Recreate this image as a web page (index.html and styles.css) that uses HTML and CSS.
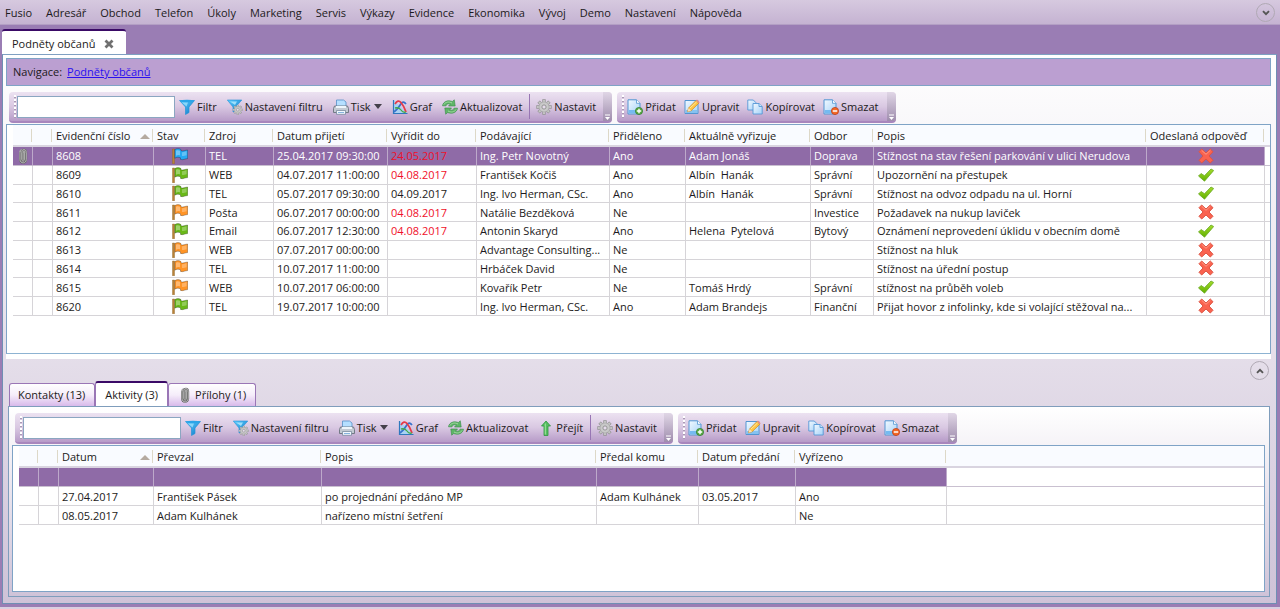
FILE: index.html
```html
<!DOCTYPE html>
<html lang="cs">
<head>
<meta charset="utf-8">
<title>Podněty občanů</title>
<link rel="stylesheet" href="styles.css">
</head>
<body>
<svg class="sprite" aria-hidden="true">
<defs>
<linearGradient id="gBlue" x1="0" y1="0" x2="1" y2="1"><stop offset="0" stop-color="#5fd0ff"/><stop offset="1" stop-color="#0b78c8"/></linearGradient>
<linearGradient id="gDoc" x1="0" y1="0" x2="1" y2="1"><stop offset="0" stop-color="#f2f9ff"/><stop offset="1" stop-color="#a5d2f8"/></linearGradient>
<linearGradient id="gCheck" x1="0" y1="0" x2="0" y2="1"><stop offset="0" stop-color="#a4dc2c"/><stop offset="1" stop-color="#62b000"/></linearGradient>
</defs>
<symbol id="funnel" viewBox="0 0 16 16"><path d="M.5 1.500h15L10 8v5.500L6.500 15.500V8z" fill="url(#gBlue)" stroke="#2592d8" stroke-width=".7"/><ellipse cx="8" cy="2" rx="7" ry="1.300" fill="#2ba5e8"/><path d="M3 3.600h6L7.500 7.500z" fill="#a9e7ff" opacity=".7"/></symbol>
<symbol id="cog" viewBox="0 0 16 16"><g stroke="#949494" stroke-width="3.400"><path d="M8 .3v15.400M.3 8h15.400M2.600 2.600l10.800 10.800M13.400 2.600L2.600 13.400"/></g><g stroke="#c4c4c4" stroke-width="2.100"><path d="M8 .9v14.200M.9 8h14.200M3 3l10 10M13 3L3 13"/></g><circle cx="8" cy="8" r="5" fill="#c9c9c9" stroke="#a5a5a5" stroke-width=".6"/><circle cx="8" cy="8" r="2.100" fill="#e6dcec" stroke="#8e8e8e" stroke-width=".9"/></symbol>
<symbol id="funnelset" viewBox="0 0 16 16"><path d="M.3 1h14.500L9.500 7v4L6 13V8z" fill="url(#gBlue)" stroke="#2592d8" stroke-width=".6"/><path d="M3 2.500h7L8 6z" fill="#b5ebff" opacity=".8"/><use href="#cog" x="5.500" y="5.500" width="10.500" height="10.500"/></symbol>
<symbol id="printer" viewBox="0 0 16 16"><path d="M3.500 8V1h7l2.500 2v5z" fill="#b5dfff" stroke="#5790c8" stroke-width=".8"/><path d="M1.500 7h13l1 2.500V13.500H.5V9.500z" fill="#c3cad3" stroke="#6a727d" stroke-width=".9"/><path d="M3 7h10v2H3z" fill="#eef5fb"/><path d="M3.500 11.500h9v3.800h-9z" fill="#f2f8ff" stroke="#6f8296" stroke-width=".7"/><path d="M5 13.500h6" stroke="#86b4de"/></symbol>
<symbol id="graph" viewBox="0 0 16 16"><path d="M1.500 1v13.500H15z" fill="#a9d2f3"/><path d="M1.500 1v13.500H15.500" fill="none" stroke="#2f78bd" stroke-width="1.200"/><path d="M2 13Q6 10 8.500 5.500T14 5" fill="none" stroke="#3872cc" stroke-width="1.700"/><path d="M3 5q3-5 6-1.500T14 13" fill="none" stroke="#e53b49" stroke-width="1.800"/><path d="M3 9q4-1 6 2t5 2" fill="none" stroke="#46a948" stroke-width="1.300"/></symbol>
<symbol id="refresh" viewBox="0 0 16 16"><g fill="#5eb567" stroke="#388c48" stroke-width=".6" stroke-linejoin="round"><path d="M.5 6.800C1.200 2.500 6 .7 10.300 2.500l2-1.700.9 6.200H6.500l1.900-2C6.300 4.300 4.500 5 4 6.800z"/><path d="M15.500 9.200c-.7 4.300-5.500 6.100-9.800 4.300l-2 1.700L2.800 9h6.700l-1.900 2c2.100.7 3.900 0 4.400-1.800z"/></g><path d="M1.800 5.600C3.500 2.800 7 2.300 10 4M14.200 10.400c-1.700 2.800-5.200 3.300-8.200 1.600" fill="none" stroke="#a8dda6" stroke-width=".9"/></symbol>
<symbol id="up" viewBox="0 0 16 16"><path d="M8 1l4.500 5H10v9.500H6V6H3.500z" fill="#57bd61" stroke="#2e9740" stroke-width=".8"/><path d="M7.300 3.500v11" stroke="#a1e79d"/></symbol>
<symbol id="doc" viewBox="0 0 16 16"><path d="M2 .8h8.500l3.500 3.500V15H2z" fill="url(#gDoc)" stroke="#5295d2" stroke-width="1"/><path d="M10.500.8v3.500H14" fill="#fff" stroke="#5295d2" stroke-width=".8"/><path d="M2.800 11h10.400v3.300H2.800z" fill="#75baf0"/></symbol>
<symbol id="add" viewBox="0 0 16 16"><use href="#doc" x="-1" width="16" height="16"/><circle cx="12" cy="12" r="3.600" fill="#5bab46" stroke="#2d7a2a" stroke-width=".7"/><path d="M9.800 12h4.400M12 9.800v4.400" stroke="#fff" stroke-width="1.400"/></symbol>
<symbol id="remove" viewBox="0 0 16 16"><use href="#doc" x="-1" width="16" height="16"/><circle cx="12" cy="12" r="3.600" fill="#f36a27" stroke="#bd3510" stroke-width=".7"/><path d="M9.800 12h4.400" stroke="#fff" stroke-width="1.500"/></symbol>
<symbol id="edit" viewBox="0 0 16 16"><path d="M1 1.500h13v13H1z" fill="url(#gDoc)" stroke="#5295d2"/><path d="M2 11h11v3H2z" fill="#85c2f0"/><path d="M4.500 9L12 1.500l2.800 2.700-7.600 7.500-3.700 1z" fill="#ffc544" stroke="#c98722" stroke-width=".7"/><path d="M12 1.500l1-1 2.700 2.700-.9 1z" fill="#ee8b82"/><path d="M3.500 12.700l1-3.700 2.700 2.700z" fill="#f7dfb5"/><path d="M6 9l6.500-6" stroke="#ffe898"/></symbol>
<symbol id="copy" viewBox="0 0 16 16"><g fill="url(#gDoc)" stroke="#5597d6" stroke-width=".9"><path d="M.8 1h5.500l2.500 2.500V11h-8z"/><path d="M6 4.500h6l3.200 3V15H6z"/><path d="M12 4.500v3h3.200"/></g></symbol>
<symbol id="clip" viewBox="0 0 16 16"><rect x="4" y="1" width="8" height="14" rx="4" fill="#a5a5a5"/><path d="M5 4.500v7c0 4.500 6.300 4.500 6.300 0V4.500c0-4-4.600-4-4.600 0v6.700c0 2.300 2.900 2.300 2.900 0V5" fill="none" stroke="#626262" stroke-width="1.700"/><path d="M5 4.500v7c0 4.500 6.300 4.500 6.300 0V4.500c0-4-4.600-4-4.600 0v6.700c0 2.300 2.900 2.300 2.900 0V5" fill="none" stroke="#c6c6c6" stroke-width=".8"/></symbol>
<symbol id="flag" viewBox="0 0 16 16"><path d="M.5 1h2v14.800h-2z" fill="#b88237" stroke="#8d6225" stroke-width=".4"/><path d="M2.800 1.600C5 .2 7.200.3 9 1.600v1.200c2.500.8 4.300-.8 6.700-.8v8.600c-2.500 0-4.500 1.700-7.200.8v-1.600c-2-.9-3.900-.7-5.700.4z" fill="currentColor" stroke="#00000055" stroke-width=".8"/><path d="M4 2.800c1.500-.8 2.700-.6 4 0v4.600c-1.500-.5-2.700-.3-4 .3z" fill="#fff" opacity=".35"/><path d="M10 4.200c2 .2 3-.5 4.600-.9v4c-1.600.2-2.800.9-4.600.7z" fill="#fff" opacity=".28"/></symbol>
<symbol id="cross" viewBox="0 0 16 16"><path d="M3.700 1L8 5l4.300-4L15 3.700 11 8l4 4.300-2.700 2.700L8 11l-4.300 4L1 12.300 5 8 1 3.700z" fill="#fa6350" stroke="#dd5544" stroke-width="1" stroke-linejoin="round"/><path d="M3.700 2.300L8 6.300l4.300-4" fill="none" stroke="#ff9f8c" stroke-width=".9"/></symbol>
<symbol id="check" viewBox="0 0 16 16"><path d="M.5 9L3 6.500l3.500 2.200L13 2l2.700 1.500-9.200 10.700z" fill="url(#gCheck)" stroke="#6aa824" stroke-width=".8" stroke-linejoin="round"/></symbol>
<symbol id="chevron" viewBox="0 0 8 6"><path d="M1 1.200l3 3 3-3" fill="none" stroke="#555" stroke-width="1.900"/></symbol>
<symbol id="more" viewBox="0 0 8 8"><path d="M2 2h5" stroke="#fff" stroke-width="1.200"/><path d="M2 4h5L4.500 7z" fill="#fff"/></symbol>
</svg>

<nav class="menu">
<button>Fusio</button><button>Adresář</button><button>Obchod</button><button>Telefon</button><button>Úkoly</button><button>Marketing</button><button>Servis</button><button>Výkazy</button><button>Evidence</button><button>Ekonomika</button><button>Vývoj</button><button>Demo</button><button>Nastavení</button><button>Nápověda</button>
<button class="round menu-end" aria-label="Rozbalit"><svg><use href="#chevron"/></svg></button>
</nav>

<main class="window">
<div class="doc-tabs"><div class="doc-tab"><span>Podněty občanů</span><button class="close" aria-label="Zavřít"><svg viewBox="0 0 10 10"><path d="M1.500 1.500l7 7M8.500 1.500l-7 7" stroke="#707070" stroke-width="2.800"/></svg></button></div></div>

<div class="page">
<div class="crumbs"><span>Navigace:</span><a href="#obcane">Podněty občanů</a></div>

<section class="upper">
<div class="bars">
<div class="bar main-bar"><span class="grip"></span><input type="text" aria-label="Hledat podněty"><div class="tools">
<button><svg><use href="#funnel"/></svg>Filtr</button><button><svg><use href="#funnelset"/></svg>Nastavení filtru</button><button><svg><use href="#printer"/></svg>Tisk<i class="drop"></i></button><button><svg><use href="#graph"/></svg>Graf</button><button><svg><use href="#refresh"/></svg>Aktualizovat</button></div><span class="sep"></span><button class="settings"><svg><use href="#cog"/></svg>Nastavit</button><button class="more" aria-label="Více"><svg><use href="#more"/></svg></button></div>
<div class="bar"><span class="grip"></span><div class="tools edit-tools"><button><svg><use href="#add"/></svg>Přidat</button><button><svg><use href="#edit"/></svg>Upravit</button><button><svg><use href="#copy"/></svg>Kopírovat</button><button><svg><use href="#remove"/></svg>Smazat</button></div><button class="more" aria-label="Více"><svg><use href="#more"/></svg></button></div>
</div>
<div class="grid">
<table class="cases">
<colgroup><col class="w-mark"><col class="w-mark"><col class="w-id"><col class="w-state"><col class="w-source"><col class="w-time"><col class="w-due"><col class="w-person"><col class="w-given"><col class="w-solver"><col class="w-dept"><col><col class="w-reply"><col class="w-end"></colgroup>
<thead><tr><th></th><th></th><th><span class="sorted">Evidenční číslo<i class="sort"></i></span></th><th>Stav</th><th>Zdroj</th><th>Datum přijetí</th><th>Vyřídit do</th><th>Podávající</th><th>Přiděleno</th><th>Aktuálně vyřizuje</th><th>Odbor</th><th>Popis</th><th>Odeslaná odpověď</th><th></th></tr></thead>
<tbody>
<tr class="selected"><td class="mark"><svg><use href="#clip"/></svg></td><td></td><td>8608</td><td class="icon blue"><svg><use href="#flag"/></svg></td><td>TEL</td><td>25.04.2017 09:30:00</td><td class="late">24.05.2017</td><td>Ing. Petr Novotný</td><td>Ano</td><td>Adam Jonáš</td><td>Doprava</td><td>Stížnost na stav řešení parkování v ulici Nerudova</td><td class="icon"><svg><use href="#cross"/></svg></td><td></td></tr>
<tr><td></td><td></td><td>8609</td><td class="icon green"><svg><use href="#flag"/></svg></td><td>WEB</td><td>04.07.2017 11:00:00</td><td class="late">04.08.2017</td><td>František Kočiš</td><td>Ano</td><td>Albín&nbsp; Hanák</td><td>Správní</td><td>Upozornění na přestupek</td><td class="icon"><svg><use href="#check"/></svg></td><td></td></tr>
<tr><td></td><td></td><td>8610</td><td class="icon green"><svg><use href="#flag"/></svg></td><td>TEL</td><td>05.07.2017 09:30:00</td><td>04.09.2017</td><td>Ing. Ivo Herman, CSc.</td><td>Ano</td><td>Albín&nbsp; Hanák</td><td>Správní</td><td>Stížnost na odvoz odpadu na ul. Horní</td><td class="icon"><svg><use href="#check"/></svg></td><td></td></tr>
<tr><td></td><td></td><td>8611</td><td class="icon orange"><svg><use href="#flag"/></svg></td><td>Pošta</td><td>06.07.2017 00:00:00</td><td class="late">04.08.2017</td><td>Natálie Bezděková</td><td>Ne</td><td></td><td>Investice</td><td>Požadavek na nukup laviček</td><td class="icon"><svg><use href="#cross"/></svg></td><td></td></tr>
<tr><td></td><td></td><td>8612</td><td class="icon green"><svg><use href="#flag"/></svg></td><td>Email</td><td>06.07.2017 12:30:00</td><td class="late">04.08.2017</td><td>Antonin Skaryd</td><td>Ano</td><td>Helena&nbsp; Pytelová</td><td>Bytový</td><td>Oznámení neprovedení úklidu v obecním domě</td><td class="icon"><svg><use href="#check"/></svg></td><td></td></tr>
<tr><td></td><td></td><td>8613</td><td class="icon orange"><svg><use href="#flag"/></svg></td><td>WEB</td><td>07.07.2017 00:00:00</td><td></td><td>Advantage Consulting...</td><td>Ne</td><td></td><td></td><td>Stížnost na hluk</td><td class="icon"><svg><use href="#cross"/></svg></td><td></td></tr>
<tr><td></td><td></td><td>8614</td><td class="icon orange"><svg><use href="#flag"/></svg></td><td>TEL</td><td>10.07.2017 11:00:00</td><td></td><td>Hrbáček David</td><td>Ne</td><td></td><td></td><td>Stížnost na úřední postup</td><td class="icon"><svg><use href="#cross"/></svg></td><td></td></tr>
<tr><td></td><td></td><td>8615</td><td class="icon orange"><svg><use href="#flag"/></svg></td><td>WEB</td><td>10.07.2017 06:00:00</td><td></td><td>Kovařík Petr</td><td>Ne</td><td>Tomáš Hrdý</td><td>Správní</td><td>stížnost na průběh voleb</td><td class="icon"><svg><use href="#check"/></svg></td><td></td></tr>
<tr><td></td><td></td><td>8620</td><td class="icon green"><svg><use href="#flag"/></svg></td><td>TEL</td><td>19.07.2017 10:00:00</td><td></td><td>Ing. Ivo Herman, CSc.</td><td>Ano</td><td>Adam Brandejs</td><td>Finanční</td><td>Přijat hovor z infolinky, kde si volající stěžoval na...</td><td class="icon"><svg><use href="#cross"/></svg></td><td></td></tr>
</tbody>
</table>
</div>
</section>

<section class="lower">
<div class="tab-row">
<div class="tabs" role="tablist"><button role="tab">Kontakty (13)</button><button role="tab" class="active" aria-selected="true">Aktivity (3)</button><button role="tab" class="attach"><svg><use href="#clip"/></svg>Přílohy (1)</button></div>
<button class="round flip" aria-label="Sbalit"><svg><use href="#chevron"/></svg></button>
</div>
<div class="tab-panel">
<div class="bars">
<div class="bar main-bar"><span class="grip"></span><input type="text" aria-label="Hledat aktivity"><div class="tools">
<button><svg><use href="#funnel"/></svg>Filtr</button><button><svg><use href="#funnelset"/></svg>Nastavení filtru</button><button><svg><use href="#printer"/></svg>Tisk<i class="drop"></i></button><button><svg><use href="#graph"/></svg>Graf</button><button><svg><use href="#refresh"/></svg>Aktualizovat</button><button><svg><use href="#up"/></svg>Přejít</button></div><span class="sep"></span><button class="settings"><svg><use href="#cog"/></svg>Nastavit</button><button class="more" aria-label="Více"><svg><use href="#more"/></svg></button></div>
<div class="bar"><span class="grip"></span><div class="tools edit-tools"><button><svg><use href="#add"/></svg>Přidat</button><button><svg><use href="#edit"/></svg>Upravit</button><button><svg><use href="#copy"/></svg>Kopírovat</button><button><svg><use href="#remove"/></svg>Smazat</button></div><button class="more" aria-label="Více"><svg><use href="#more"/></svg></button></div>
</div>
<div class="grid">
<table class="activities">
<colgroup><col class="w-mark"><col class="w-mark"><col class="w-date"><col class="w-taker"><col class="w-note"><col class="w-target"><col class="w-passed"><col class="w-done"><col></colgroup>
<thead><tr><th></th><th></th><th><span class="sorted">Datum<i class="sort"></i></span></th><th>Převzal</th><th>Popis</th><th>Předal komu</th><th>Datum předání</th><th>Vyřízeno</th><th></th></tr></thead>
<tbody>
<tr class="selected"><td></td><td></td><td></td><td></td><td></td><td></td><td></td><td></td><td></td></tr>
<tr><td></td><td></td><td>27.04.2017</td><td>František Pásek</td><td>po projednání předáno MP</td><td>Adam Kulhánek</td><td>03.05.2017</td><td>Ano</td><td></td></tr>
<tr><td></td><td></td><td>08.05.2017</td><td>Adam Kulhánek</td><td>nařízeno místní šetření</td><td></td><td></td><td>Ne</td><td></td></tr>
</tbody>
</table>
</div>
</div>
</section>
</div>
</main>
</body>
</html>
```
FILE: styles.css
```css
* { box-sizing: border-box; }
body {
  margin: 0;
  min-height: 100vh;
  display: flex;
  flex-direction: column;
  background: #9a7db4;
  color: #1c1a20;
  font: 11px/16px "Open Sans", "Noto Sans", sans-serif;
}
button { font: inherit; color: inherit; background: none; border: 0; padding: 0; white-space: nowrap; }
svg { width: 16px; height: 16px; flex: none; display: block; }
.sprite { position: absolute; width: 0; height: 0; }

.menu {
  display: flex;
  align-items: center;
  gap: 14px;
  height: 25px;
  padding: 1px 5px 0 5px;
  background: linear-gradient(#d6c9df, #c5b3d2);
  border-bottom: 1px solid #b39fc4;
}
.round {
  width: 19px;
  height: 19px;
  border: 1px solid #b0a9b4;
  border-radius: 50%;
  display: flex;
  align-items: center;
  justify-content: center;
}
.round svg { width: 8px; height: 6px; }
.menu-end { margin-left: auto; }
.flip svg { transform: rotate(180deg); }

.window {
  flex: 1;
  display: flex;
  flex-direction: column;
  padding: 4px 3px 3px 2px;
  border-bottom: 2px solid #d9cfe1;
}
.doc-tabs { display: flex; }
.doc-tab {
  display: flex;
  align-items: center;
  gap: 9px;
  height: 25px;
  padding: 2px 12px 0 10px;
  background: #fff;
  border-top: 2px solid #3a0a66;
  border-radius: 3px 3px 0 0;
}
.close svg { width: 10px; height: 10px; }

.page {
  flex: 1;
  display: flex;
  flex-direction: column;
  padding: 3px 5px 6px 3px;
  border: 1px solid #6f8fb4;
  border-top-color: #7fa0c2;
  background: linear-gradient(#fff, #cfc3d8);
}
.crumbs {
  display: flex;
  align-items: center;
  gap: 5px;
  height: 28px;
  padding: 0 6px;
  background: #bb9fd1;
  border: 1px solid #7fa3c6;
}
.crumbs a { color: #2a10f0; }

.upper { padding: 6px 0 5px; display: flex; flex-direction: column; }
.upper .grid { height: 230px; border-bottom-color: #8db3d2; box-shadow: 0 5px #fff; }
.bars { display: flex; gap: 5px; padding-left: 3px; height: 32px; }
.bar {
  display: flex;
  align-items: center;
  height: 31px;
  padding-left: 5px;
  background: linear-gradient(#ece2f1, #d9c8e2 50%, #b79bc8);
  border-bottom: 2px solid #a886bd;
  border-radius: 4px;
  overflow: hidden;
}
.grip { width: 2px; height: 23px; background: repeating-linear-gradient(#fff 0 2px, #a99ab4 2px 3px, #d5c6de 3px 4px); }
.bar input {
  width: 158px;
  height: 22px;
  margin: 0 4px 0 1px;
  border: 1px solid #8ba6c1;
  background: #fff;
  font: inherit;
}
.tools { display: flex; gap: 10px; }
.bar .edit-tools { gap: 8px; padding: 0 9px 0 3px; }
.bar button { display: flex; align-items: center; gap: 2px; }
.drop { border: 4px solid transparent; border-top: 5px solid #44404a; border-bottom: 0; margin-left: 1px; }
.sep { width: 1px; height: 25px; margin: 0 6px 0 7px; background: #9876b4; }
.bar .settings { margin-right: 7px; }
.bar .more { align-self: stretch; align-items: flex-end; width: 9px; background: linear-gradient(#e0d6e6, #9f8dad); }
.more svg { width: 8px; height: 8px; }

.grid { background: #fff; border: 1px solid #7fa3c6; padding-left: 6px; overflow: hidden; }
table { width: 100%; table-layout: fixed; border-collapse: separate; border-spacing: 0; }
.cases { height: 191px; }
th, td { padding: 0 0 0 3px; text-align: left; white-space: nowrap; overflow: hidden; font-weight: 400; line-height: 16px; }
th { height: 22px; padding-top: 2px; border-bottom: 2px solid #d9d4e0; background: linear-gradient(#ddd8c8, #ddd8c8) right 1px top 4px / 1px 13px no-repeat #f9fbff; }
th:last-child { background: #f9fbff; }
td { height: 18px; padding-top: 1px; border-right: 1px solid #d6d4d8; border-bottom: 1px solid #d6d4d8; }
td:last-child { border-right: 0; }
.activities td { height: 19px; }
.selected td { background: #8f6ba7; color: #fff; border-right-color: #bda9ca; border-bottom-color: #c9c0d0; }
.selected td:last-child { background: #fff; }
td.late, .selected td.late { color: #f0102a; }
.icon { padding: 0; }
.icon svg { margin: 0 auto; }
.mark { padding: 0 2px; }
.blue, .selected td.blue { color: #26a9f4; }
.green { color: #69b818; }
.orange { color: #ff9426; }
.sorted { display: flex; align-items: center; justify-content: space-between; padding-right: 4px; }
.sort { border: 5px solid transparent; border-bottom-color: #b5aaa0; border-top: 0; }

.w-mark { width: 20px; }
.w-id { width: 101px; }
.w-state { width: 52px; }
.w-source { width: 68px; }
.w-time { width: 114px; }
.w-due { width: 89px; }
.w-person { width: 133px; }
.w-given { width: 76px; }
.w-solver { width: 125px; }
.w-dept { width: 63px; }
.w-reply { width: 118px; }
.w-end { width: 5px; }
.w-date { width: 95px; }
.w-taker { width: 168px; }
.w-note { width: 275px; }
.w-target { width: 102px; }
.w-passed { width: 97px; }
.w-done { width: 151px; }

.lower { flex: 1; display: flex; flex-direction: column; padding: 0 1px 0 2px; }
.tab-row { display: flex; justify-content: space-between; height: 47px; padding: 2px 1px 0 1px; }
.tabs { display: flex; align-items: flex-end; }
.tabs button {
  display: flex;
  align-items: center;
  gap: 2px;
  height: 23px;
  padding: 0 9px 0 8px;
  border: 1px solid #9a76b6;
  border-bottom: 0;
  border-radius: 3px 3px 0 0;
  background: linear-gradient(#fff, #f5edfa 50%, #d8b9ea);
}
.tabs .active { height: 25px; padding: 0 9px; border-top: 2px solid #3a0a66; background: #fff; }
.tab-panel {
  flex: 1;
  display: flex;
  flex-direction: column;
  padding: 6px 4px 4px 3px;
  border: 1px solid #7f9dbc;
  background: linear-gradient(#fff, #cfc3d8);
}
.tab-panel .grid { flex: 1; }
```
